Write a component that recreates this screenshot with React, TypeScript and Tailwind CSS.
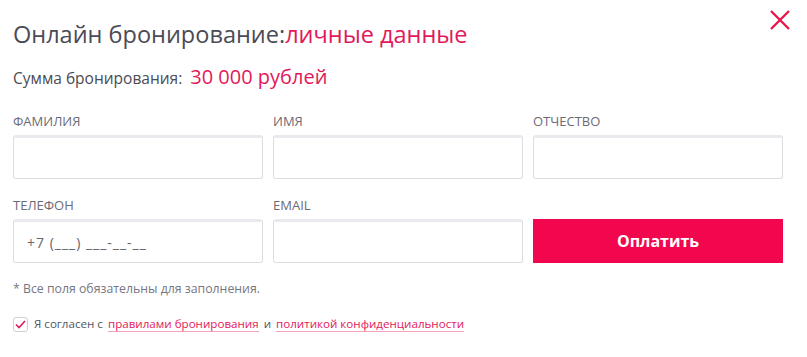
export default function App() {
  const font = { fontFamily: '"Open Sans", "Noto Sans", sans-serif' };
  return (
    <div className="relative h-[357px] w-[807px] bg-white text-[#55555f]" style={font}>
      <button className="absolute right-[16px] top-[9px] text-[#e8174e]" aria-label="Закрыть">
        <svg width="22" height="22" viewBox="0 0 22 22" fill="none" stroke="currentColor" strokeWidth="2.4">
          <path d="M2 2 L20 20 M20 2 L2 20" />
        </svg>
      </button>
      <div className="px-[13px] pt-[18px]">
        <h1 className="text-[23.5px] leading-[32px] font-normal text-[#4b4b55]">
          Онлайн бронирование:<span className="text-[#e2195a]">личные данные</span>
        </h1>
        <div className="mt-[12px] flex items-baseline gap-[8px]">
          <span className="text-[15.5px] text-[#4b4b55]">Сумма бронирования:</span>
          <span className="text-[20px] text-[#e2195a]">30 000 рублей</span>
        </div>
        <div className="mt-[20px] grid grid-cols-[250px_250px_250px] gap-x-[10px] gap-y-[17px]">
          <Field label="ФАМИЛИЯ" />
          <Field label="ИМЯ" />
          <Field label="ОТЧЕСТВО" />
          <Field label="ТЕЛЕФОН" placeholder="+7 (___) ___-__-__" />
          <Field label="EMAIL" />
          <div className="flex flex-col justify-end">
            <button className="h-[44px] w-full bg-[#f2074f] text-[16px] font-bold text-white">
              Оплатить
            </button>
          </div>
        </div>
        <p className="mt-[17px] text-[12.3px] text-[#77777f]">* Все поля обязательны для заполнения.</p>
        <div className="mt-[17px] flex items-center gap-[6px] text-[11.6px] text-[#55555f]">
          <span className="flex h-[15px] w-[15px] items-center justify-center rounded-[3px] border border-[#cfcfd5] bg-white">
            <svg width="11" height="9" viewBox="0 0 11 9" fill="none" stroke="#e2195a" strokeWidth="1.6">
              <path d="M1 4.5 L4 7.5 L10 1" />
            </svg>
          </span>
          <span>
            Я согласен с{" "}
            <a className="ml-[2px] border-b border-[#f2a3bb] text-[#e2195a]">правилами бронирования</a>
            <span className="mx-[5px]">и</span>
            <a className="border-b border-[#f2a3bb] text-[#e2195a]">политикой конфиденциальности</a>
          </span>
        </div>
      </div>
    </div>
  );
}

function Field({ label, placeholder }: { label: string; placeholder?: string }) {
  return (
    <label className="flex flex-col">
      <span className="mb-[5px] text-[13px] leading-[18px] text-[#6b6b75]">{label}</span>
      <input
        placeholder={placeholder}
        className="h-[44px] w-full rounded-[3px] border border-[#dcdce2] border-t-[3px] border-t-[#e9e9ee] bg-white px-[13px] text-[14px] tracking-[1px] text-[#55555f] placeholder:text-[#66666e] outline-none"
      />
    </label>
  );
}
